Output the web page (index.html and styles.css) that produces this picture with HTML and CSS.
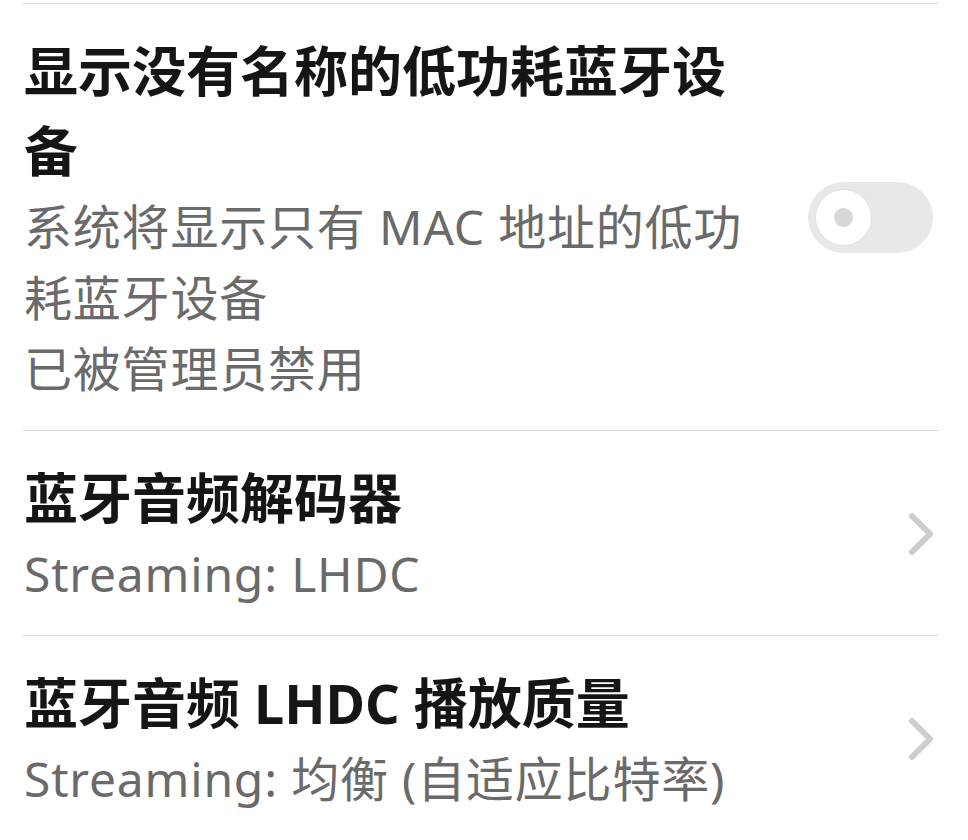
FILE: index.html
```html
<!DOCTYPE html>
<html lang="zh-CN">
<head>
    <meta charset="UTF-8">
    <meta name="viewport" content="width=device-width, initial-scale=1.0">
    <title>蓝牙设置</title>
    <link rel="stylesheet" href="styles.css">
</head>
<body>

<div class="settings">
    <div class="item">
        <div class="text">
            <div class="title">显示没有名称的低功耗蓝牙设备</div>
            <div class="summary">系统将显示只有 MAC 地址的低功耗蓝牙设备</div>
            <div class="summary">已被管理员禁用</div>
        </div>
        <div class="switch disabled">
            <span class="knob"></span>
        </div>
    </div>

    <div class="item">
        <div class="text">
            <div class="title">蓝牙音频解码器</div>
            <div class="summary">Streaming: LHDC</div>
        </div>
        <svg class="arrow" width="28" height="44" viewBox="0 0 28 44">
            <polyline points="5,4 23,22 5,40" />
        </svg>
    </div>

    <div class="item">
        <div class="text">
            <div class="title">蓝牙音频 LHDC 播放质量</div>
            <div class="summary">Streaming: 均衡 (自适应比特率)</div>
        </div>
        <svg class="arrow" width="28" height="44" viewBox="0 0 28 44">
            <polyline points="5,4 23,22 5,40" />
        </svg>
    </div>
</div>

</body>
</html>
```

FILE: styles.css
```css
body {
    margin: 0;
    padding: 0;
    background-color: #ffffff;
    font-family: "Noto Sans", "Noto Sans CJK SC", sans-serif;
    color: #151515;
}
.settings {
    padding: 3px 29px 0 23px;
}
.item {
    display: flex;
    align-items: center;
    gap: 44px;
    padding: 27px 0 26px 1px;
    border-top: 1px solid #dedede;
}
.text {
    flex: 1;
}
.title {
    font-size: 54px;
    font-weight: 700;
    line-height: 80px;
}
.summary {
    font-size: 48px;
    line-height: 71px;
    letter-spacing: 0.8px;
    color: #6a6a6a;
}

/* switch, off and greyed out */
.switch {
    width: 125px;
    height: 71px;
    margin-right: 6px;
    border-radius: 36px;
    background-color: #e8e8e8;
    display: flex;
    align-items: center;
    padding: 0 8px;
    box-sizing: border-box;
}
.knob {
    width: 55px;
    height: 55px;
    border-radius: 50%;
    background-color: #ffffff;
    box-shadow: 0 0 0 1px #e2e2e2;
    display: flex;
    align-items: center;
    justify-content: center;
}
.knob::after {
    content: "";
    width: 19px;
    height: 19px;
    border-radius: 50%;
    background-color: #d8d8d8;
}

.arrow {
    margin-right: 4px;
    flex-shrink: 0;
}
.arrow polyline {
    fill: none;
    stroke: #cdcdcd;
    stroke-width: 6;
    stroke-linecap: round;
    stroke-linejoin: round;
}
```
